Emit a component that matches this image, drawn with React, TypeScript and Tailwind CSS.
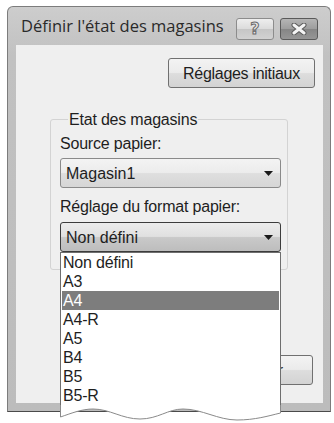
import React from "react";

const items = ["Non défini", "A3", "A4", "A4-R", "A5", "B4", "B5", "B5-R"];

function Arrow() {
  return (
    <svg width="9" height="5" viewBox="0 0 9 5" className="shrink-0">
      <path d="M0 0 H9 L4.5 5 Z" fill="#1a1a1a" />
    </svg>
  );
}

export default function App() {
  return (
    <div
      className="relative w-[334px] h-[423px] bg-white overflow-hidden text-[#1e1e1e]"
      style={{ fontFamily: '"Liberation Sans", Arial, sans-serif' }}
    >
      {/* Window */}
      <div className="ml-[7px] mt-[6px] w-[324px] h-[406px] border border-[#7c7c7c] border-b-[#4a4a4a] rounded-t-[6px] bg-[linear-gradient(180deg,#cdcdcd,#c1c1c1_12%,#bcbcbc)] flex flex-col">
        {/* Title bar */}
        <div className="h-[38px] flex items-center pl-[13px] pr-[12px] shrink-0">
          <div
            className="text-[16.5px] text-[#2a2a2a] leading-none mt-[1px]"
            style={{ fontFamily: '"Open Sans", "Noto Sans", sans-serif' }}
          >
            Définir l'état des magasins
          </div>
          <div className="ml-auto flex items-center gap-[6px] mt-[5px]">
            <div className="w-[38px] h-[22px] rounded-[3px] border border-[#8c8c8c] bg-[linear-gradient(180deg,#eeeeee,#dcdcdc_48%,#c6c6c6_52%,#d2d2d2)] flex items-center justify-center">
              <span
                className="text-[16px] font-bold leading-none text-[#e8e8e8]"
                style={{
                  fontFamily: '"DejaVu Sans", sans-serif',
                  WebkitTextStroke: "1px #6a6a6a",
                }}
              >
                ?
              </span>
            </div>
            <div className="w-[38px] h-[22px] rounded-[3px] border border-[#5a5a5a] bg-[linear-gradient(180deg,#b5b5b5,#9e9e9e_48%,#868686_52%,#969696)] flex items-center justify-center">
              <svg width="16" height="12" viewBox="0 0 16 12">
                <path d="M3 2 L13 10 M13 2 L3 10" stroke="#5a5a5a" strokeWidth="5" strokeLinecap="round" />
                <path d="M3 2 L13 10 M13 2 L3 10" stroke="#f4f4f4" strokeWidth="3" strokeLinecap="round" />
              </svg>
            </div>
          </div>
        </div>

        {/* Client area */}
        <div className="ml-[8px] mr-[7px] mb-[8px] flex-1 bg-[#efefef] flex flex-col text-[16px] leading-[19px]">
          <div className="flex justify-end pt-[13px] pr-[8px]">
            <div className="w-[147px] h-[30px] rounded-[3px] border border-[#707070] bg-[linear-gradient(180deg,#f3f3f3,#ebebeb_48%,#dddddd_52%,#d3d3d3)] flex items-center justify-center tracking-[-0.3px]">
              Réglages initiaux
            </div>
          </div>

          <fieldset className="ml-[34px] mt-[22px] w-[238px] h-[160px] border border-[#d3d3d3] rounded-[3px] pl-[9px] pr-[6px] pb-[17px]">
            <legend className="ml-[8px] px-[1px] leading-[19px] tracking-[-0.2px]">Etat des magasins</legend>
            <div className="mt-[5px] tracking-[-0.2px]">Source papier:</div>
            <div className="mt-[5px] h-[30px] rounded-[3px] border border-[#8a8a8a] bg-[linear-gradient(180deg,#f3f3f3,#ececec_48%,#dedede_52%,#d6d6d6)] flex items-center pl-[5px] pr-[7px]">
              <span className="flex-1">Magasin1</span>
              <Arrow />
            </div>
            <div className="mt-[9px] tracking-[-0.2px]">Réglage du format papier:</div>
            <div className="mt-[6px] h-[30px] rounded-[3px] border border-[#3c3c3c] bg-[linear-gradient(180deg,#ececec,#e0e0e0_48%,#c9c9c9_52%,#bdbdbd)] flex items-center pl-[5px] pr-[7px]">
              <span className="flex-1">Non défini</span>
              <Arrow />
            </div>
          </fieldset>

          <div className="flex justify-end pr-[10px] mt-[85px]">
            <div className="w-[108px] h-[30px] rounded-[3px] border border-[#707070] bg-[linear-gradient(180deg,#f3f3f3,#ebebeb_48%,#dddddd_52%,#d3d3d3)] flex items-center justify-end pr-[29px]">
              Fermer
            </div>
          </div>
        </div>
      </div>

      {/* Drop-down list (overlay) */}
      <div className="absolute left-[60px] top-[252px] w-[221px] text-[16px] leading-[19px]">
        <div className="bg-white border-x border-t border-[#6e6e6e] px-[1px]">
          {items.map((it) => (
            <div
              key={it}
              className={
                "h-[19px] pl-[1px] tracking-[-0.2px] " +
                (it === "A4" ? "bg-[#7d7d7d] text-white" : "text-[#1e1e1e]")
              }
            >
              {it}
            </div>
          ))}
        </div>
        <svg width="221" height="18" viewBox="0 0 221 18" className="block">
          <path
            d="M0.5 0 L0.5 12 C12 8 22 4 33 4 C50 4 62 14 80 14 C98 14 108 4 123 4 C142 4 158 15 177 15 C195 15 208 11 220.5 8 L220.5 0 Z"
            fill="#ffffff"
          />
          <path
            d="M0.5 0 L0.5 12 C12 8 22 4 33 4 C50 4 62 14 80 14 C98 14 108 4 123 4 C142 4 158 15 177 15 C195 15 208 11 220.5 8 L220.5 0"
            fill="none"
            stroke="#8a8a8a"
            strokeWidth="1"
          />
        </svg>
      </div>
    </div>
  );
}
